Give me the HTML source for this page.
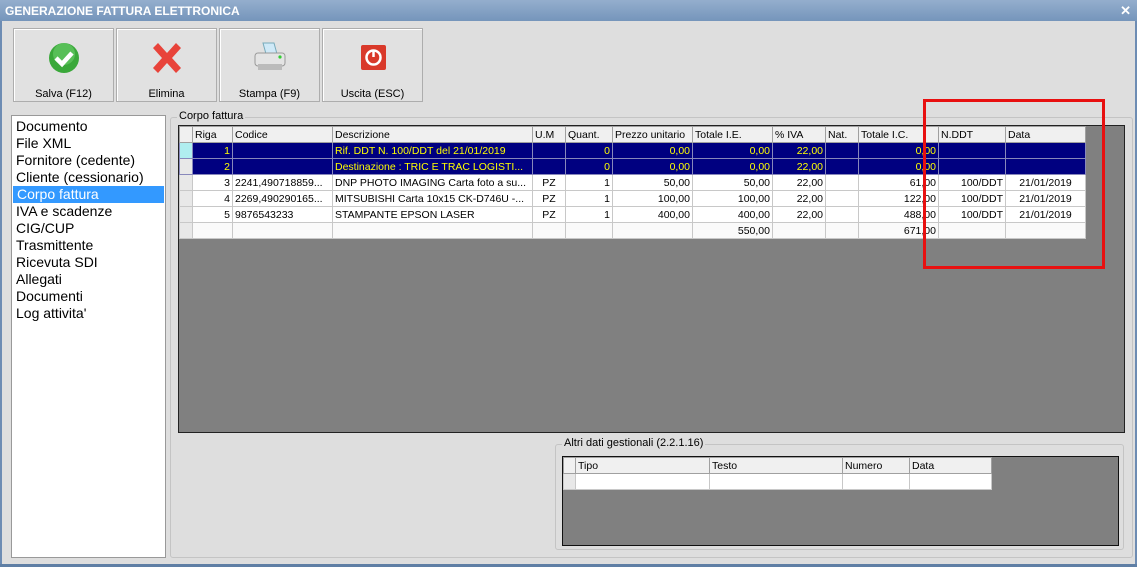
<!DOCTYPE html><html><head><style>
*{margin:0;padding:0;box-sizing:border-box}
body{width:1137px;height:567px;overflow:hidden;background:#dedede;font-family:"Liberation Sans",sans-serif;font-size:11px;position:relative;color:#000}
.a{position:absolute}
.btn{position:absolute;top:28px;width:101px;height:74px;background:#e1e1e1;border:1px solid #adadad;box-shadow:inset 1px 1px 0 #fff}
.btn span{position:absolute;left:0;right:0;top:59px;text-align:center;font-size:11px}
.btn svg{position:absolute;left:32px;top:11px}
table{border-collapse:collapse;position:absolute;table-layout:fixed}
td{border:1px solid #c8c8c8;height:16px;padding:0 2px;white-space:nowrap;overflow:hidden;font-size:10.5px;line-height:14px}
tr.h td{background:#f0f0f0;border-color:#a0a0a0}
tr.s td{background:#000080;color:#ffff00;border-color:#8888bb}
td.r{text-align:right}td.c{text-align:center}
td.i{background:#e8e8e8}
.list div{height:17px;line-height:17px;font-size:14px;padding-left:4px}
.grp{position:absolute;border:1px solid #c4c4c4;border-radius:3px}
.grp b{position:absolute;top:-8px;left:6px;background:#dedede;font-weight:normal;padding:0 2px;font-size:11px}
</style></head><body>
<div class="a" style="left:0;top:0;width:1137px;height:21px;background:linear-gradient(#94aecd,#7595bb);color:#fff;font-weight:bold;font-size:12px;line-height:22px;padding-left:5px">GENERAZIONE FATTURA ELETTRONICA</div>
<div class="a" style="right:6px;top:3px;color:#fff;font-size:13px;font-weight:bold">✕</div>
<div class="a" style="left:0;top:21px;width:2px;height:546px;background:#6d8cb3"></div>
<div class="a" style="right:0;top:21px;width:2px;height:546px;background:#6d8cb3"></div>
<div class="a" style="left:0;bottom:0;width:1137px;height:3px;background:#5f7fa5"></div>

<div class="btn" style="left:13px"><svg width="36" height="36"><circle cx="18" cy="18" r="15" fill="#3aa83a"/><circle cx="18" cy="14" r="11" fill="#7ddc7d" opacity=".45"/><path d="M10 18l6 6 10-11" stroke="#fff" stroke-width="4.5" fill="none"/></svg><span>Salva (F12)</span></div>
<div class="btn" style="left:116px"><svg width="36" height="36"><path d="M4 8l5-5 9 10 9-10 5 5-9 10 9 10-5 5-9-10-9 10-5-5 9-10z" fill="#e8433a"/></svg><span>Elimina</span></div>
<div class="btn" style="left:219px"><svg width="36" height="36"><path d="M11 3h11l3 11H14z" fill="#cfe9f7" stroke="#7ab"/><rect x="3" y="13" width="30" height="13" rx="3" fill="#e4e4e4" stroke="#999"/><rect x="6" y="24" width="24" height="6" fill="#bbb"/><circle cx="28" cy="17" r="1.6" fill="#3c3"/></svg><span>Stampa (F9)</span></div>
<div class="btn" style="left:322px"><svg width="36" height="36"><rect x="6" y="5" width="25" height="25" rx="2" fill="#d9392a"/><circle cx="18.5" cy="17.5" r="7" stroke="#fff" stroke-width="2.5" fill="none"/><path d="M18.5 10v7" stroke="#fff" stroke-width="2.5"/></svg><span>Uscita (ESC)</span></div>

<div class="a list" style="left:11px;top:115px;width:155px;height:443px;background:#fff;border:1px solid #999;padding-top:2px">
<div>Documento</div><div>File XML</div><div>Fornitore (cedente)</div><div>Cliente (cessionario)</div><div style="background:#3399ff;color:#fff;margin:0 1px">Corpo fattura</div><div>IVA e scadenze</div><div>CIG/CUP</div><div>Trasmittente</div><div>Ricevuta SDI</div><div>Allegati</div><div>Documenti</div><div>Log attivita'</div></div>

<div class="grp" style="left:170px;top:117px;width:963px;height:441px"><b>Corpo fattura</b></div>
<div class="a" style="left:178px;top:125px;width:947px;height:308px;background:#808080;border:1px solid #222"></div>
<table style="left:179px;top:126px;width:906px">
<colgroup><col style="width:13px"><col style="width:40px"><col style="width:100px"><col style="width:200px"><col style="width:33px"><col style="width:47px"><col style="width:80px"><col style="width:80px"><col style="width:53px"><col style="width:33px"><col style="width:80px"><col style="width:67px"><col style="width:80px"></colgroup>
<tr class="h"><td></td><td>Riga</td><td>Codice</td><td>Descrizione</td><td>U.M</td><td>Quant.</td><td>Prezzo unitario</td><td>Totale I.E.</td><td>% IVA</td><td>Nat.</td><td>Totale I.C.</td><td>N.DDT</td><td>Data</td></tr>
<tr class="s"><td style="background:#b0eef0"></td><td class="r">1</td><td></td><td>Rif. DDT N. 100/DDT del 21/01/2019</td><td></td><td class="r">0</td><td class="r">0,00</td><td class="r">0,00</td><td class="r">22,00</td><td></td><td class="r">0,00</td><td></td><td></td></tr>
<tr class="s"><td style="background:#e8e8e8"></td><td class="r">2</td><td></td><td>Destinazione : TRIC E TRAC LOGISTI...</td><td></td><td class="r">0</td><td class="r">0,00</td><td class="r">0,00</td><td class="r">22,00</td><td></td><td class="r">0,00</td><td></td><td></td></tr>
<tr style="background:#fff"><td class="i"></td><td class="r">3</td><td>2241,490718859...</td><td>DNP PHOTO IMAGING Carta foto a su...</td><td class="c">PZ</td><td class="r">1</td><td class="r">50,00</td><td class="r">50,00</td><td class="r">22,00</td><td></td><td class="r">61,00</td><td class="r">100/DDT</td><td class="c">21/01/2019</td></tr>
<tr style="background:#fff"><td class="i"></td><td class="r">4</td><td>2269,490290165...</td><td>MITSUBISHI Carta 10x15 CK-D746U -...</td><td class="c">PZ</td><td class="r">1</td><td class="r">100,00</td><td class="r">100,00</td><td class="r">22,00</td><td></td><td class="r">122,00</td><td class="r">100/DDT</td><td class="c">21/01/2019</td></tr>
<tr style="background:#fff"><td class="i"></td><td class="r">5</td><td>9876543233</td><td>STAMPANTE EPSON LASER</td><td class="c">PZ</td><td class="r">1</td><td class="r">400,00</td><td class="r">400,00</td><td class="r">22,00</td><td></td><td class="r">488,00</td><td class="r">100/DDT</td><td class="c">21/01/2019</td></tr>
<tr style="background:#fafafa"><td class="i"></td><td></td><td></td><td></td><td></td><td></td><td></td><td class="r">550,00</td><td></td><td></td><td class="r">671,00</td><td></td><td></td></tr>
</table>
<div class="a" style="left:923px;top:99px;width:182px;height:170px;border:3px solid #e81010"></div>

<div class="grp" style="left:555px;top:444px;width:569px;height:106px"><b>Altri dati gestionali (2.2.1.16)</b></div>
<div class="a" style="left:562px;top:456px;width:557px;height:90px;background:#808080;border:1px solid #111"></div>
<table style="left:563px;top:457px;width:428px">
<colgroup><col style="width:12px"><col style="width:134px"><col style="width:133px"><col style="width:67px"><col style="width:82px"></colgroup>
<tr class="h"><td></td><td>Tipo</td><td>Testo</td><td>Numero</td><td>Data</td></tr>
<tr style="background:#fff"><td class="i"></td><td></td><td></td><td></td><td></td></tr>
</table>
</body></html>
